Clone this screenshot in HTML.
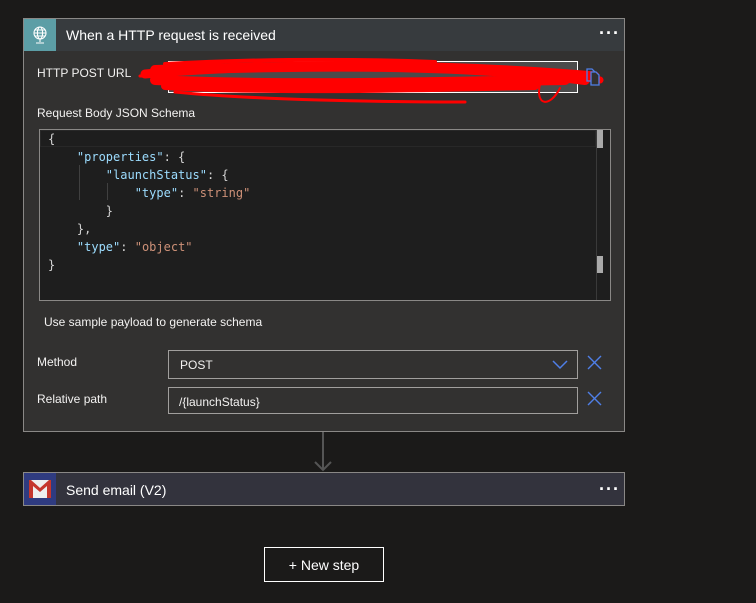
<!DOCTYPE html>
<html><head><style>
*{margin:0;padding:0;box-sizing:border-box}
body{width:756px;height:603px;background:#1b1a19;font-family:"Segoe UI","Liberation Sans",sans-serif;color:#fff;position:relative;overflow:hidden}
.abs{position:absolute}
.lbl{position:absolute;font-size:12px;color:#f3f2f1}
.code{position:absolute;font-family:"DejaVu Sans Mono","Liberation Mono",monospace;font-size:12px;white-space:pre;color:#d4d4d4;line-height:18px}
.k{color:#9cdcfe}.s{color:#ce9178}
.dots{position:absolute;font-size:18px;font-weight:bold;letter-spacing:1px;line-height:10px}
</style></head><body>
<div class="abs" style="left:23px;top:18px;width:602px;height:414px;background:#323130;border:1px solid #8a8886"></div>
<div class="abs" style="left:24px;top:19px;width:600px;height:32px;background:#373b3e"></div>
<div class="abs" style="left:24px;top:19px;width:32px;height:32px;background:#5c9ea6"></div>
<svg class="abs" style="left:31px;top:25px" width="18" height="20" viewBox="0 0 18 20"><g fill="none" stroke="#fff" stroke-width="1.1"><circle cx="9" cy="8" r="6"/><ellipse cx="9" cy="8" rx="2.6" ry="6"/><path d="M3 8h12M4 5h10M4 11h10M9 14v3M5 18h8"/></g></svg>
<div class="abs" style="left:66px;top:27px;font-size:14px">When a HTTP request is received</div>
<div class="dots" style="left:599px;top:28px">···</div>
<div class="lbl" style="left:37px;top:66px">HTTP POST URL</div>
<div class="abs" style="left:168px;top:61px;width:410px;height:32px;background:#4b4b4b;border:1px solid #fff"></div>
<svg class="abs" style="left:135px;top:56px" width="470" height="54" viewBox="0 0 470 54"><g fill="none" stroke="#f00" stroke-linecap="round"><path d="M10 18 C120 8 300 6 460 20" stroke-width="9"/><path d="M20 14 C150 10 320 6 450 24" stroke-width="10"/><path d="M20 24 C140 30 300 26 430 24" stroke-width="10"/><path d="M30 30 C140 36 300 32 400 30" stroke-width="8"/><path d="M30 8 C100 4 200 2 300 6" stroke-width="4"/><path d="M40 36 C120 44 250 46 330 46" stroke-width="3"/><path d="M405 28 C400 50 415 52 425 32" stroke-width="2"/><path d="M330 14 C360 12 420 16 465 24" stroke-width="7"/><path d="M5 20 L40 21" stroke-width="3"/></g></svg>
<svg class="abs" style="left:586px;top:68px" width="16" height="18" viewBox="0 0 16 18"><g fill="none" stroke="#4f7fe8" stroke-width="1.3"><path d="M1 1h5l3 3v9H1z"/><path d="M5 4h5l3 3v10H5z" fill="#323130"/></g></svg>
<div class="lbl" style="left:37px;top:106px">Request Body JSON Schema</div>
<div class="abs" style="left:39px;top:129px;width:572px;height:172px;background:#1e1e1e;border:1px solid #8a8886"></div>
<div class="abs" style="left:40px;top:130px;width:556px;height:17px;border:1px solid #282828"></div>
<div class="abs" style="left:596px;top:130px;width:1px;height:170px;background:#3a3a3a"></div>
<div class="abs" style="left:597px;top:130px;width:6px;height:18px;background:#aaa"></div>
<div class="abs" style="left:597px;top:256px;width:6px;height:17px;background:#aaa"></div>
<div class="abs" style="left:79px;top:165px;width:1px;height:35px;background:#404040"></div>
<div class="abs" style="left:107px;top:183px;width:1px;height:17px;background:#404040"></div>
<div class="code" style="left:48px;top:130px">{
    <span class="k">"properties"</span>: {
        <span class="k">"launchStatus"</span>: {
            <span class="k">"type"</span>: <span class="s">"string"</span>
        }
    },
    <span class="k">"type"</span>: <span class="s">"object"</span>
}</div>
<div class="lbl" style="left:44px;top:315px">Use sample payload to generate schema</div>
<div class="lbl" style="left:37px;top:355px">Method</div>
<div class="abs" style="left:168px;top:350px;width:410px;height:29px;border:1px solid #a19f9d"></div>
<div class="lbl" style="left:180px;top:358px">POST</div>
<svg class="abs" style="left:552px;top:360px" width="16" height="10"><path d="M1 1l7 7 7-7" fill="none" stroke="#4f7fe8" stroke-width="1.5"/></svg>
<svg class="abs" style="left:587px;top:355px" width="15" height="15"><path d="M1 1l13 13M14 1L1 14" stroke="#4f7fe8" stroke-width="1.4"/></svg>
<div class="lbl" style="left:37px;top:392px">Relative path</div>
<div class="abs" style="left:168px;top:387px;width:410px;height:27px;border:1px solid #a19f9d"></div>
<div class="lbl" style="left:179px;top:395px">/{launchStatus}</div>
<svg class="abs" style="left:587px;top:391px" width="15" height="15"><path d="M1 1l13 13M14 1L1 14" stroke="#4f7fe8" stroke-width="1.4"/></svg>
<svg class="abs" style="left:312px;top:432px" width="22" height="40"><path d="M11 0v38M3 30l8 8 8-8" fill="none" stroke="#555" stroke-width="2"/></svg>
<div class="abs" style="left:23px;top:472px;width:602px;height:34px;background:#33333d;border:1px solid #8a8886"></div>
<div class="abs" style="left:24px;top:473px;width:32px;height:32px;background:#2f3b80"></div>
<svg class="abs" style="left:29px;top:480px" width="22" height="18" viewBox="0 0 22 18"><rect x="0" y="0" width="22" height="18" fill="#eee"/><path d="M0 0v18h4V6l7 6 7-6v12h4V0h-2l-9 8-9-8z" fill="#c5362d"/></svg>
<div class="abs" style="left:66px;top:482px;font-size:14px">Send email (V2)</div>
<div class="dots" style="left:599px;top:484px">···</div>
<div class="abs" style="left:264px;top:547px;width:120px;height:35px;border:1px solid #fff;font-size:14px;text-align:center;line-height:35px">+ New step</div>
</body></html>
